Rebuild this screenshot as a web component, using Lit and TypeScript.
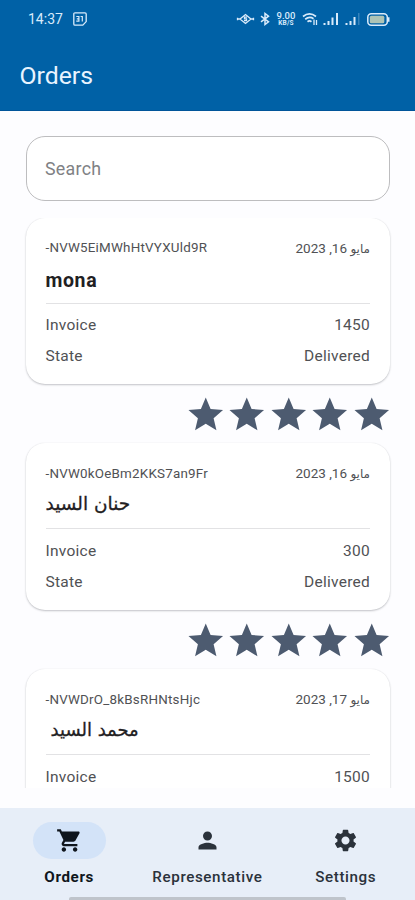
import { LitElement, html, svg, css } from "lit";
import { customElement, property } from "lit/decorators.js";

interface Order {
  id: string;
  month: string;
  day: string;
  name: string;
  arabic: boolean;
  indent?: boolean;
  invoice: string;
  state: string;
}

const ORDERS: Order[] = [
  { id: "-NVW5EiMWhHtVYXUld9R", month: "مايو", day: "16, 2023", name: "mona", arabic: false, invoice: "1450", state: "Delivered" },
  { id: "-NVW0kOeBm2KKS7an9Fr", month: "مايو", day: "16, 2023", name: "حنان السيد", arabic: true, invoice: "300", state: "Delivered" },
  { id: "-NVWDrO_8kBsRHNtsHjc", month: "مايو", day: "17, 2023", name: "محمد السيد", arabic: true, indent: true, invoice: "1500", state: "Delivered" },
];

const STAR = "M12 17.27L18.18 21l-1.64-7.03L22 9.24l-7.19-.61L12 2 9.19 8.63 2 9.24l5.46 4.73L5.82 21z";
const CART = "M7 18c-1.1 0-1.99.9-1.99 2S5.9 22 7 22s2-.9 2-2-.9-2-2-2zM1 2v2h2l3.6 7.59-1.35 2.45c-.16.28-.25.61-.25.96 0 1.1.9 2 2 2h12v-2H7.42c-.14 0-.25-.11-.25-.25l.03-.12.9-1.63h7.45c.75 0 1.41-.41 1.75-1.03l3.58-6.49c.08-.14.12-.31.12-.48 0-.55-.45-1-1-1H5.21l-.94-2H1zm16 16c-1.1 0-1.99.9-1.99 2s.89 2 1.99 2 2-.9 2-2-.9-2-2-2z";
const PERSON = "M12 12c2.21 0 4-1.79 4-4s-1.79-4-4-4-4 1.79-4 4 1.79 4 4 4zm0 2c-2.67 0-8 1.34-8 4v2h16v-2c0-2.66-5.33-4-8-4z";
const GEAR = "M19.14 12.94c.04-.3.06-.61.06-.94 0-.32-.02-.64-.07-.94l2.03-1.58c.18-.14.23-.41.12-.61l-1.92-3.32c-.12-.22-.37-.29-.59-.22l-2.39.96c-.5-.38-1.03-.7-1.62-.94l-.36-2.54c-.04-.24-.24-.41-.48-.41h-3.84c-.24 0-.43.17-.47.41l-.36 2.54c-.59.24-1.13.57-1.62.94l-2.39-.96c-.22-.08-.47 0-.59.22L2.74 8.87c-.12.21-.08.47.12.61l2.03 1.58c-.05.3-.09.63-.09.94s.02.64.07.94l-2.03 1.58c-.18.14-.23.41-.12.61l1.92 3.32c.12.22.37.29.59.22l2.39-.96c.5.38 1.03.7 1.62.94l.36 2.54c.05.24.24.41.48.41h3.84c.24 0 .44-.17.47-.41l.36-2.54c.59-.24 1.13-.56 1.62-.94l2.39.96c.22.08.47 0 .59-.22l1.92-3.32c.12-.22.07-.47-.12-.61l-2.01-1.58zM12 15.6c-1.98 0-3.6-1.62-3.6-3.6s1.62-3.6 3.6-3.6 3.6 1.62 3.6 3.6-1.62 3.6-3.6 3.6z";

const icon = (d: string) => html`<svg viewBox="0 0 24 24">${svg`<path d=${d}></path>`}</svg>`;

@customElement("status-bar")
class StatusBar extends LitElement {
  static styles = css`
    :host { display: flex; align-items: center; height: 38px; padding: 0 25px 0 28px; color: #d9ebfb; }
    .time { font-size: 14px; letter-spacing: 0; line-height: 16px; width: 45px; white-space: nowrap; }
    svg { display: block; fill: none; stroke: currentColor; }
    .calendar { width: 14px; height: 14px; }
    .spacer { flex: 1; }
    .hearing { width: 19px; height: 14px; margin-right: 5px; }
    .bluetooth { width: 10px; height: 14px; margin-right: 6px; }
    .speed { display: flex; flex-direction: column; align-items: center; width: 20px; font-weight: 500; margin-right: 6px; }
    .rate { font-size: 9.5px; line-height: 9px; }
    .unit { font-size: 6.5px; line-height: 7px; font-weight: 700; letter-spacing: 0.2px; }
    .wifi { width: 16px; height: 14px; margin-right: 5px; }
    .signal { width: 16px; height: 14px; margin-right: 6px; }
    .battery { width: 23px; height: 13px; }
    .solid { fill: currentColor; stroke: none; }
  `;
  render() {
    return html`
      <span class="time">14:37</span>
      <svg class="calendar" viewBox="0 0 14 14" stroke-width="1.3"><path d="M2 .8h10q1.2 0 1.2 1.2v7.6l-3.4 3.6H2Q.8 13.200.8 12V2Q.8.8 2 .8z"/><path d="M3.300 4.500h2.600v4.600H3.300M3.800 6.800h2M7.600 4.500h1.700v5.100" stroke-width="1.200"/></svg>
      <span class="spacer"></span>
      <svg class="hearing" viewBox="0 0 19 14" stroke-width="1.300"><path d="M1 7h3l5.500-4.500L15 7h3M4 7l5.500 4.500L15 7M11 5.200H8.500v1.600h2v1.800H8M1.500 5.800v2.400M17.500 5.800v2.400"/></svg>
      <svg class="bluetooth" viewBox="0 0 10 14" stroke-width="1.500"><path d="M1 4.200l7.500 5.600L5 12.500v-11l3.500 2.700L1 9.800"/></svg>
      <span class="speed"><span class="rate">9.00</span><span class="unit">KB/S</span></span>
      <svg class="wifi" viewBox="0 0 16 14" stroke-width="1.700"><path d="M1 4.500Q7.500-.8 14 4.500M3.200 7.200q4.300-3.200 8.300-.4M5.500 9.700q2-1.500 4 0"/><path d="M12 13V7.500M14.500 8v5" stroke-width="1.300"/></svg>
      <svg class="signal" viewBox="0 0 16 14"><path class="solid" d="M.5 11h2v2h-2zM4.500 9h2v4h-2zM8.500 5.500h2V13h-2zM13 1h2v12h-2z"/></svg>
      <svg class="signal" viewBox="0 0 16 14"><path class="solid" d="M.5 11h2v2h-2zM4.500 9h2v4h-2zM8.500 5h2v8h-2z"/><path class="solid" opacity=".25" d="M13 1h1.500v12H13z"/></svg>
      <svg class="battery" viewBox="0 0 23 13"><rect x=".8" y=".8" width="19.500" height="11.400" rx="3.500" stroke-width="1.500"/><rect x="2.800" y="2.800" width="14.500" height="7.400" rx="1.500" fill="#aec4b6" stroke="none"/><path class="solid" d="M21 4.200h1.500v4.600H21z"/></svg>
    `;
  }
}

@customElement("order-card")
class OrderCard extends LitElement {
  @property({ attribute: false }) order!: Order;
  static styles = css`
    :host { display: block; flex: none; }
    .card { height: 166.500px; box-sizing: border-box; margin: 0 25.500px; padding: 18px 19.500px 0 20px; border-radius: 19px; background: #fff; box-shadow: 0 1px 2px rgba(40, 45, 55, 0.27), 0 0 1px rgba(40, 45, 55, 0.1); color: #505154; }
    .row { display: flex; justify-content: space-between; align-items: center; white-space: nowrap; }
    .meta { height: 24px; font-size: 13.400px; }
    .id { letter-spacing: 0.220px; }
    .date { font-size: 13.500px; }
    .month { font-size: 12px; }
    .name { height: 40px; line-height: 40px; margin-top: 1px; font-size: 19.500px; font-weight: 700; letter-spacing: 0.600px; color: #1f2022; white-space: pre; }
    .arabic { font-family: "DejaVu Sans", sans-serif; font-weight: 400; font-size: 18.500px; line-height: 36px; letter-spacing: 0; -webkit-text-stroke: 0.3px #1f2022; }
    .indent { padding-left: 5px; font-size: 18px; }
    .divider { height: 1px; margin: 2px 0 6px; background: #e2e2e4; }
    .detail { height: 31px; font-size: 15.500px; letter-spacing: 0.250px; }
    .stars { display: flex; justify-content: flex-end; padding: 9.800px 22.800px 8.200px 0; }
    svg { display: block; width: 41.500px; height: 41.500px; fill: #4d5b70; }
  `;
  render() {
    const o = this.order;
    return html`
      <div class="card">
        <div class="row meta"><span class="id">${o.id}</span><span class="date" dir="rtl"><span class="month">${o.month}</span> ${o.day}</span></div>
        <div class="name ${o.arabic ? "arabic" : ""} ${o.indent ? "indent" : ""}">${o.name}</div>
        <div class="divider"></div>
        <div class="row detail"><span>Invoice</span><span>${o.invoice}</span></div>
        <div class="row detail"><span>State</span><span>${o.state}</span></div>
      </div>
      <div class="stars">${[1, 2, 3, 4, 5].map(() => icon(STAR))}</div>
    `;
  }
}

@customElement("nav-bar")
class NavBar extends LitElement {
  static styles = css`
    :host { display: block; flex: none; height: 92px; background: #e7eef8; position: relative; }
    .items { display: grid; grid-template-columns: repeat(3, 138.300px); padding-top: 13.500px; }
    .item { display: flex; flex-direction: column; align-items: center; color: #2b323b; font-size: 15.200px; font-weight: 500; letter-spacing: 0.600px; }
    .pill { display: flex; align-items: center; justify-content: center; width: 73px; height: 37px; border-radius: 19px; }
    .label { line-height: 20px; margin-top: 8px; }
    .active .pill { background: #d3e3f8; }
    .active { color: #10161d; font-weight: 700; }
    svg { display: block; width: 27px; height: 27px; fill: currentColor; }
    .handle { position: absolute; left: 69px; bottom: 0; width: 277px; height: 3px; background: #bfc4cb; border-radius: 2px 2px 0 0; }
  `;
  render() {
    return html`
      <div class="items">
        <div class="item active"><span class="pill">${icon(CART)}</span><span class="label">Orders</span></div>
        <div class="item"><span class="pill">${icon(PERSON)}</span><span class="label">Representative</span></div>
        <div class="item"><span class="pill">${icon(GEAR)}</span><span class="label">Settings</span></div>
      </div>
      <div class="handle"></div>
    `;
  }
}

@customElement("app-root")
class AppRoot extends LitElement {
  static styles = css`
    :host { display: flex; flex-direction: column; height: 900px; overflow: hidden; background: #fdfdff; font-family: Roboto, "DejaVu Sans", sans-serif; }
    .header { flex: none; height: 111px; background: #0061a6; box-sizing: border-box; border-bottom: 1.500px solid #00559a; }
    .title { margin: 0; padding: 20px 0 0 19.500px; font-size: 24.800px; line-height: 36px; font-weight: 400; color: #e9f4ff; }
    .search { flex: none; height: 65px; box-sizing: border-box; margin: 24.500px 25px 17px 25.500px; padding-left: 18.500px; border: 1.500px solid #bdbdbf; border-radius: 19px; display: flex; align-items: center; font-size: 17.800px; letter-spacing: 0.300px; color: #808184; background: #fff; }
    .list { flex: none; height: 570.500px; overflow: hidden; }
    .gap { flex: 1; }
  `;
  render() {
    return html`
      <div class="header"><status-bar></status-bar><h1 class="title">Orders</h1></div>
      <div class="search">Search</div>
      <div class="list">${ORDERS.map((o) => html`<order-card .order=${o}></order-card>`)}</div>
      <div class="gap"></div>
      <nav-bar></nav-bar>
    `;
  }
}
